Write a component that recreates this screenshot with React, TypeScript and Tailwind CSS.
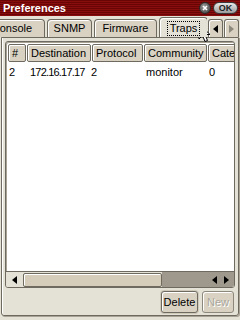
import React from "react";

const font = { fontFamily: '"Liberation Sans", Arial, sans-serif' };

function Tab({ label, className = "", selected = false }: { label: string; className?: string; selected?: boolean }) {
  if (selected) {
    return (
      <div className={`relative z-10 h-[21px] mb-[-1px] flex items-center justify-center rounded-t-[4px] border border-b-0 border-[#6e6a5f] bg-[#e4e1d6] shadow-[inset_1px_1px_0_#fff] ${className}`}>
        <span className="border border-dotted border-black px-[2px] leading-[13px] text-[11px] text-black">{label}</span>
      </div>
    );
  }
  return (
    <div className={`h-[18px] flex items-center justify-center rounded-t-[4px] border border-b-0 border-[#6e6a5f] bg-[#d9d2c3] shadow-[inset_1px_1px_0_#fff] text-[11px] text-black ${className}`}>
      {label}
    </div>
  );
}

function HeaderCell({ label, className = "" }: { label: string; className?: string }) {
  return (
    <div className={`h-[18px] flex items-center px-[3px] rounded-[2px] border border-[#6e6a5f] bg-[#d9d2c3] shadow-[inset_1px_1px_0_#fff] text-[11px] text-black whitespace-nowrap overflow-hidden shrink-0 ${className}`}>
      {label}
    </div>
  );
}

function TriLeft({ color = "#000" }: { color?: string }) {
  return (
    <svg width="5" height="8" viewBox="0 0 5 8"><path d="M5 0 L0 4 L5 8 Z" fill={color} /></svg>
  );
}
function TriRight({ color = "#000" }: { color?: string }) {
  return (
    <svg width="5" height="8" viewBox="0 0 5 8"><path d="M0 0 L5 4 L0 8 Z" fill={color} /></svg>
  );
}

export default function App() {
  return (
    <div className="relative w-[240px] h-[320px] bg-[#e4e1d6] flex flex-col overflow-hidden" style={font}>
      {/* Title bar */}
      <div className="h-[16px] flex items-center pl-[3px] pr-[2px] bg-[repeating-linear-gradient(180deg,#6a0505_0px,#6a0505_1px,#880d0d_1px,#880d0d_2px)]">
        <span className="text-white font-bold text-[11px] leading-none">Preferences</span>
        <div className="ml-auto flex items-center gap-[2px]">
          <div className="w-[12px] h-[12px] rounded-full bg-[radial-gradient(circle_at_40%_35%,#9a9a9a,#3a3a3a)] border border-[#2a2a2a] flex items-center justify-center">
            <svg width="6" height="6" viewBox="0 0 6 6"><path d="M1 1 L5 5 M5 1 L1 5" stroke="#fff" strokeWidth="1.6" /></svg>
          </div>
          <div className="w-[25px] h-[12px] rounded-full bg-[linear-gradient(180deg,#e8e8e8,#9c9c9c)] border border-[#3a3a3a] flex items-center justify-center text-[9px] font-bold leading-none text-[#222]">
            OK
          </div>
        </div>
      </div>

      {/* Tabs row */}
      <div className="h-[21px] flex items-end">
        <div className="w-[207px] flex items-end overflow-hidden gap-[2px]">
          <Tab label="Console" className="ml-[-21px] w-[66px] shrink-0" />
          <Tab label="SNMP" className="w-[45px] shrink-0" />
          <Tab label="Firmware" className="w-[63px] shrink-0" />
          <Tab label="Traps" selected className="w-[49px] shrink-0" />
        </div>
        <div className="ml-auto flex items-end gap-[1px] pr-[1px]">
          <div className="w-[15px] h-[18px] rounded-t-[3px] border border-b-0 border-[#6e6a5f] bg-[#d9d2c3] shadow-[inset_1px_1px_0_#fff] flex items-center justify-center">
            <TriLeft />
          </div>
          <div className="w-[15px] h-[18px] rounded-t-[3px] border border-b-0 border-[#6e6a5f] bg-[#d9d2c3] shadow-[inset_1px_1px_0_#fff] flex items-center justify-center">
            <TriRight color="#8c887c" />
          </div>
        </div>
      </div>

      {/* Panel */}
      <div className="mx-[1px] h-[279px] rounded-b-[3px] border border-[#6e6a5f] shadow-[inset_1px_0_0_#fff,1px_1px_0_#a8a394] flex flex-col px-[3px] pt-[3px]">
        {/* Table box */}
        <div className="h-[247px] rounded-[3px] border border-[#6e6a5f] shadow-[inset_1px_1px_0_#a8a394] bg-white flex flex-col overflow-hidden p-[1px]">
          <div className="flex gap-[1px] pt-[1px] pl-[1px]">
            <HeaderCell label="#" className="w-[18px]" />
            <HeaderCell label="Destination" className="w-[64px]" />
            <HeaderCell label="Protocol" className="w-[51px]" />
            <HeaderCell label="Community" className="w-[63px]" />
            <HeaderCell label="Category" className="w-[40px]" />
          </div>
          <div className="flex h-[16px] items-center text-[11px] text-black mt-[2px] pl-[1px]">
            <div className="w-[19px] pl-[1px] shrink-0">2</div>
            <div className="w-[63px] pl-[3px] shrink-0 whitespace-nowrap tracking-[-0.8px]">172.16.17.17</div>
            <div className="w-[53px] pl-[1px] shrink-0">2</div>
            <div className="w-[64px] pl-[3px] shrink-0">monitor</div>
            <div className="pl-[2px] shrink-0">0</div>
          </div>
          <div className="flex-1" />
          {/* Horizontal scrollbar */}
          <div className="h-[16px] flex items-center bg-[#e4e1d6] mx-[-1px] mb-[-1px] border-t border-[#6e6a5f]">
            <div className="w-[17px] flex items-center justify-center"><TriLeft /></div>
            <div className="w-[139px] h-[14px] rounded-[2px] border border-[#6e6a5f] bg-[#d5ccb9] shadow-[inset_1px_1px_0_#fff]" />
            <div className="flex-1 h-full bg-[#9e998c] flex items-center justify-end gap-[7px] pr-[5px]">
              <TriLeft />
              <TriRight />
            </div>
          </div>
        </div>

        {/* Buttons */}
        <div className="flex justify-end gap-[4px] mt-[3px] pr-[1px]">
          <div className="w-[37px] h-[22px] rounded-[3px] border border-[#6e6a5f] bg-[#d9d2c3] shadow-[inset_1px_1px_0_#fff,0_0_0_1px_#cfc9b9] flex items-center justify-center text-[11px] text-black">
            Delete
          </div>
          <div className="w-[32px] h-[22px] rounded-[3px] border border-[#8c887c] bg-[#d9d2c3] shadow-[inset_1px_1px_0_#fff] flex items-center justify-center text-[11px] text-[#a9a69b] [text-shadow:1px_1px_0_#fff]">
            New
          </div>
        </div>
      </div>

      {/* Mouse cursor */}
      <svg className="absolute left-[198px] top-[23px]" width="14" height="20" viewBox="0 0 14 20">
        <path d="M1 1 L1 16 L4.5 12.5 L7 18.5 L9.5 17.5 L7 11.5 L12 11.5 Z" fill="#fff" stroke="#000" strokeWidth="1" strokeLinejoin="miter" />
      </svg>
    </div>
  );
}
